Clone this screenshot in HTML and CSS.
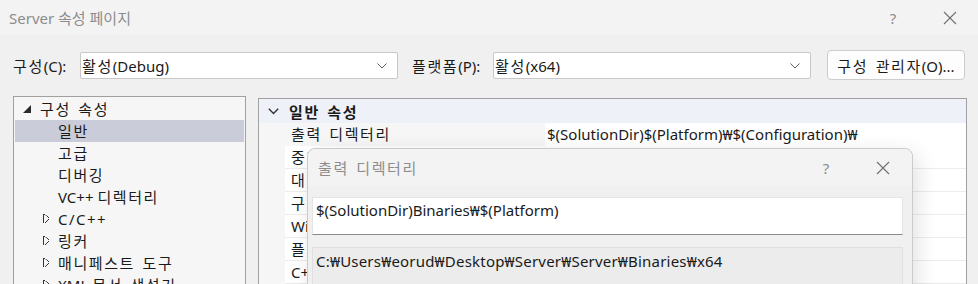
FILE: index.html
```html
<!DOCTYPE html>
<html lang="ko">
<head>
    <meta charset="UTF-8">
    <title>Server 속성 페이지</title>
    <link rel="stylesheet" href="styles.css">
</head>
<body>
    <div class="window">
        <div class="titlebar">
            <span class="title">Server 속성 페이지</span>
            <span class="help">?</span>
            <svg class="close" width="14" height="14" viewBox="0 0 14 14"><path d="M1 1L13 13M13 1L1 13" stroke="#707070" stroke-width="1.1" fill="none"/></svg>
        </div>

        <div class="toolbar">
            <span class="label lbl-config"><span class="k">구성</span>(C):</span>
            <div class="combo">
                <span><span class="k">활성</span>(Debug)</span>
                <svg width="10" height="6" viewBox="0 0 10 6"><path d="M0.5 0.5L5 5L9.5 0.5" stroke="#606060" fill="none"/></svg>
            </div>
            <span class="label lbl-platform"><span class="k">플랫폼</span>(P):</span>
            <div class="combo">
                <span><span class="k">활성</span>(x64)</span>
                <svg width="10" height="6" viewBox="0 0 10 6"><path d="M0.5 0.5L5 5L9.5 0.5" stroke="#606060" fill="none"/></svg>
            </div>
            <button class="manager"><span class="k">구성 관리자</span>(O)...</button>
        </div>

        <div class="main">
            <!-- left tree -->
            <div class="tree">
                <div class="node root k"><span class="arrow-open"></span>구성 속성</div>
                <div class="node child selected k">일반</div>
                <div class="node child k">고급</div>
                <div class="node child k">디버깅</div>
                <div class="node child">VC++ <span class="k">디렉터리</span></div>
                <div class="node child plus"><span class="arrow-closed"></span>C/C++</div>
                <div class="node child k"><span class="arrow-closed"></span>링커</div>
                <div class="node child k"><span class="arrow-closed"></span>매니페스트 도구</div>
                <div class="node child"><span class="arrow-closed"></span>XML <span class="k">문서 생성기</span></div>
            </div>

            <!-- property grid -->
            <div class="grid">
                <div class="group">
                    <svg class="chev" width="11" height="7" viewBox="0 0 11 7"><path d="M0.8 0.8L5.5 5.5L10.2 0.8" stroke="#333" stroke-width="1.4" fill="none"/></svg>
                    <span class="k">일반 속성</span>
                </div>
                <div class="row first">
                    <div class="name k">출력 디렉터리</div>
                    <div class="value">$(SolutionDir)$(Platform)₩$(Configuration)₩</div>
                </div>
                <div class="row"><div class="name k">중간 디렉터리</div><div class="value"></div></div>
                <div class="row"><div class="name k">대상 이름</div><div class="value"></div></div>
                <div class="row"><div class="name k">구성 형식</div><div class="value"></div></div>
                <div class="row"><div class="name">Windows SDK <span class="k">버전</span></div><div class="value"></div></div>
                <div class="row"><div class="name k">플랫폼 도구 집합</div><div class="value"></div></div>
                <div class="row"><div class="name">C++ <span class="k">언어 표준</span></div><div class="value"></div></div>
            </div>
        </div>

        <!-- edit dialog on top -->
        <div class="dialog">
            <div class="dlg-title">
                <span class="title k">출력 디렉터리</span>
                <span class="help">?</span>
                <svg class="close" width="14" height="14" viewBox="0 0 14 14"><path d="M1 1L13 13M13 1L1 13" stroke="#707070" stroke-width="1.1" fill="none"/></svg>
            </div>
            <div class="dlg-body">
                <div class="edit">$(SolutionDir)Binaries₩$(Platform)</div>
                <div class="evaluated">C:₩Users₩eorud₩Desktop₩Server₩Server₩Binaries₩x64</div>
            </div>
        </div>
    </div>
</body>
</html>
```

FILE: styles.css
```css
body {
    margin: 0;
    font-family: "Noto Sans", "Noto Sans CJK KR", sans-serif;
    font-size: 15px;
    color: #1a1a1a;
    background-color: #f0f0f0;
    overflow: hidden;
}
.k {
    letter-spacing: 1.6px;
    word-spacing: 2px;
}
.window {
    position: relative;
    width: 978px;
    height: 284px;
    overflow: hidden;
}
.titlebar {
    height: 35px;
    background-color: #f3f3f3;
    display: flex;
    align-items: center;
    padding-left: 9px;
}
.titlebar .title {
    color: #8c8c8c;
    flex: 1;
}
.help {
    color: #8c8c8c;
    font-size: 15px;
    width: 14px;
    text-align: center;
}
.titlebar .help {
    margin-right: 43px;
}
.titlebar .close {
    margin-right: 21px;
}
.toolbar {
    height: 61px;
    display: flex;
    align-items: flex-start;
    padding: 15px 0 0 13px;
    box-sizing: border-box;
}
.label {
    height: 27px;
    margin-top: 2px;
    display: flex;
    align-items: center;
    white-space: pre;
}
.lbl-config {
    width: 67px;
}
.lbl-platform {
    width: 81px;
    margin-left: 14px;
}
.combo {
    width: 318px;
    height: 27px;
    margin-top: 2px;
    box-sizing: border-box;
    background-color: white;
    border: 1px solid #c8c8c8;
    border-radius: 2px;
    display: flex;
    align-items: center;
    justify-content: space-between;
    padding: 0 10px 0 1px;
}
.manager {
    width: 138px;
    height: 30px;
    margin-left: 16px;
    background-color: #fdfdfd;
    border: 1px solid #cccccc;
    border-radius: 4px;
    font-family: inherit;
    font-size: 15px;
    color: #1a1a1a;
    padding: 0;
}
.main {
    display: flex;
    align-items: flex-start;
    padding-left: 13px;
    height: 188px;
}
.tree {
    width: 233px;
    height: 200px;
    box-sizing: border-box;
    border: 1px solid #a0a0a0;
    background-color: #f6f6f6;
    padding: 1px 1px 0 1px;
}
.node {
    height: 22px;
    line-height: 22px;
    position: relative;
    white-space: nowrap;
}
.node.root {
    padding-left: 25px;
}
.node.child {
    padding-left: 43px;
}
.node.plus {
    letter-spacing: 1.5px;
}
.node.selected {
    background-color: #cbccda;
}
.arrow-open {
    position: absolute;
    left: 8px;
    top: 7px;
    width: 0;
    height: 0;
    border-left: 8px solid transparent;
    border-bottom: 8px solid #2a2a2a;
}
.arrow-closed {
    position: absolute;
    left: 28px;
    top: 6px;
    width: 5px;
    height: 9px;
    background: linear-gradient(to top right, transparent 48%, #333 49%, #333 58%, transparent 59%) top / 100% 50% no-repeat,
                linear-gradient(to bottom right, transparent 48%, #333 49%, #333 58%, transparent 59%) bottom / 100% 50% no-repeat;
    border-left: 1px solid #333;
}
.grid {
    width: 709px;
    height: 200px;
    margin-left: 12px;
    margin-top: 2px;
    box-sizing: border-box;
    border: 1px solid #a0a0a0;
    background-color: #f6f6f6;
}
.group {
    height: 24px;
    background-color: #eef1f8;
    display: flex;
    align-items: center;
    font-weight: bold;
}
.group .chev {
    margin: 0 10px 0 9px;
}
.row {
    display: flex;
    height: 23px;
    margin-left: 26px;
    box-sizing: border-box;
    border-bottom: 1px solid #ececec;
    background-color: white;
}
.row.first {
    background-color: transparent;
    border-bottom: none;
}
.row .name {
    width: 260px;
    padding-left: 6px;
    line-height: 22px;
    box-sizing: border-box;
    white-space: nowrap;
}
.row .value {
    flex: 1;
    background-color: white;
    padding-left: 2px;
    line-height: 22px;
}
.dialog {
    position: absolute;
    left: 307px;
    top: 148px;
    width: 606px;
    height: 160px;
    box-sizing: border-box;
    border: 1px solid #cbcbcb;
    border-radius: 8px 8px 0 0;
    background-color: #f0f0f0;
    box-shadow: 4px 6px 22px rgba(0, 0, 0, 0.12);
}
.dlg-title {
    height: 37px;
    background-color: #f3f3f3;
    border-radius: 8px 8px 0 0;
    display: flex;
    align-items: center;
    padding-left: 10px;
}
.dlg-title .title {
    color: #8c8c8c;
    flex: 1;
}
.dlg-title .help {
    margin-right: 43px;
}
.dlg-title .close {
    margin-right: 22px;
}
.dlg-body {
    padding: 11px 9px 0 4px;
}
.edit {
    height: 38px;
    box-sizing: border-box;
    background-color: white;
    border: 1px solid #e4e4e4;
    border-bottom: 1px solid #8a8a8a;
    padding: 2px 3px;
    line-height: 20px;
}
.evaluated {
    height: 60px;
    margin-top: 12px;
    box-sizing: border-box;
    background-color: #ececec;
    border: 1px solid #e0e0e0;
    padding: 3px 3px;
    line-height: 20px;
    letter-spacing: 0.2px;
}
```
